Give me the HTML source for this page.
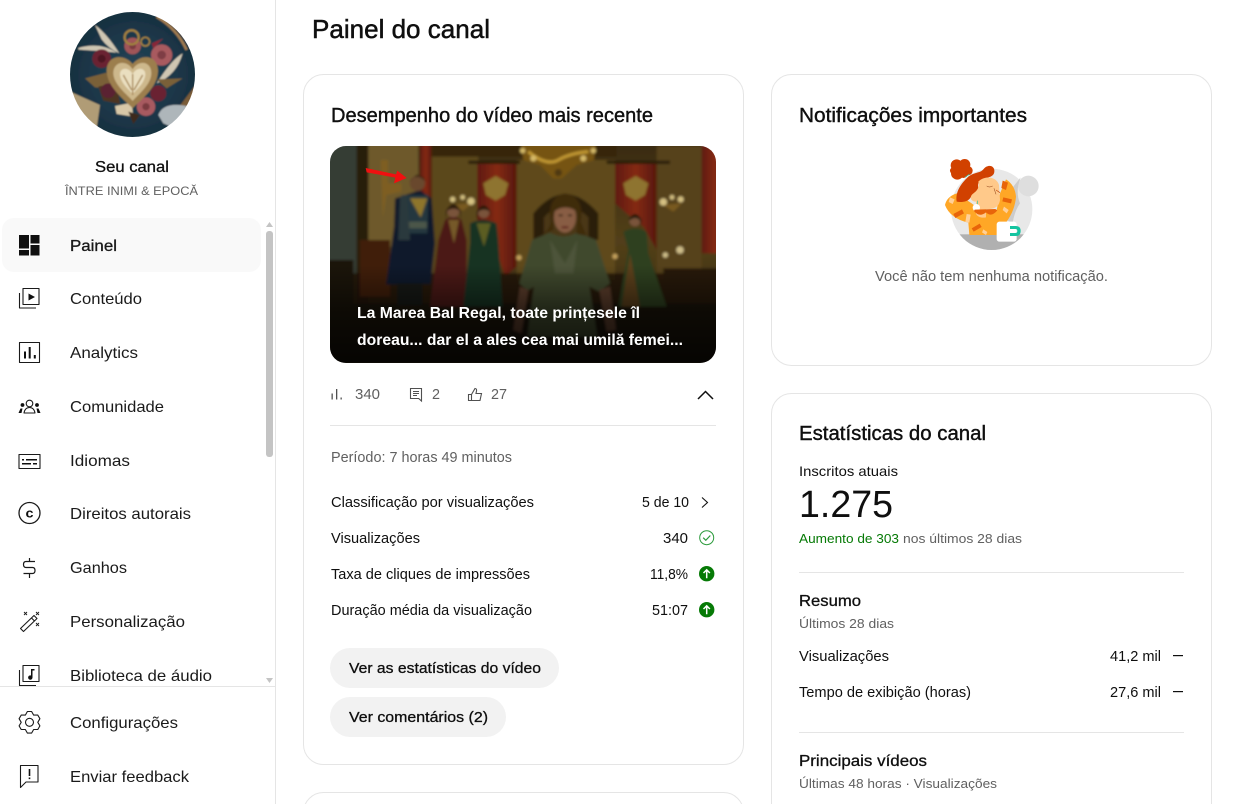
<!DOCTYPE html>
<html lang="pt"><head><meta charset="utf-8"><title>Painel do canal</title>
<style>
html,body{margin:0;padding:0;background:#fff;width:1238px;height:804px;overflow:hidden}
svg{display:block;position:absolute;left:0;top:0}
text{font-family:"Liberation Sans",sans-serif;fill:#0f0f0f;font-size:15px}
.m{stroke:#0f0f0f;stroke-width:.3px}
.h{font-size:20px;stroke:#0f0f0f;stroke-width:.4px}
.n{font-size:16px;fill:#1a1a1a}
.g{fill:#606060}
.s{font-size:13px;fill:#606060}
.w{fill:#fff;font-size:16px;font-weight:bold}
.card{fill:#fff;stroke:#e5e5e5;stroke-width:1}
.div{stroke:#e5e5e5;stroke-width:1}
.i{fill:none;stroke:#1a1a1a;stroke-width:1.1;stroke-linejoin:round}
.k{fill:#0f0f0f}
</style></head><body>
<svg width="1238" height="804" viewBox="0 0 1238 804" xmlns="http://www.w3.org/2000/svg">
<defs>
<clipPath id="av"><circle cx="132.5" cy="74.5" r="62.5"/></clipPath>
<clipPath id="th"><rect x="330" y="146" width="386" height="217" rx="16"/></clipPath>
<clipPath id="nv"><rect x="0" y="200" width="275" height="486"/></clipPath>
<clipPath id="nc"><circle cx="275" cy="208" r="122"/></clipPath>
<filter id="b1" x="-5%" y="-5%" width="110%" height="110%"><feGaussianBlur stdDeviation="4"/></filter>
<filter id="b3" x="-5%" y="-5%" width="110%" height="110%"><feGaussianBlur stdDeviation="2"/></filter>
<linearGradient id="fade" x1="0" y1="0" x2="0" y2="1"><stop offset=".55" stop-color="#000" stop-opacity="0"/><stop offset=".76" stop-color="#000" stop-opacity=".5"/><stop offset="1" stop-color="#000" stop-opacity=".8"/></linearGradient>
<linearGradient id="wall" x1="0" y1="0" x2="0" y2="1"><stop offset="0" stop-color="#3e2e12"/><stop offset=".45" stop-color="#5e4a20"/><stop offset="1" stop-color="#30240f"/></linearGradient>
<linearGradient id="cur" x1="0" y1="0" x2="1" y2="0"><stop offset="0" stop-color="#6e1c12"/><stop offset=".5" stop-color="#9c3018"/><stop offset="1" stop-color="#641a10"/></linearGradient>
<radialGradient id="avbg" cx=".5" cy=".5" r=".7"><stop offset="0" stop-color="#24465a"/><stop offset="1" stop-color="#102230"/></radialGradient>
</defs>

<!-- sidebar -->
<line x1="275.5" y1="0" x2="275.5" y2="804" class="div"/>
<g clip-path="url(#av)"><g transform="scale(.3333)"><g filter="url(#b3)">
<rect x="180" y="10" width="440" height="430" fill="url(#avbg)"/>
<path d="M460 38Q530 70 590 170L610 30Z" fill="#6a4e30"/><path d="M470 50Q530 85 560 150" fill="none" stroke="#a07c50" stroke-width="8"/>
<path d="M590 250L530 330 590 345Z" fill="#7a5c38"/>
<path d="M200 270L300 315 285 420 190 410Z" fill="#b09c76"/>
<path d="M345 318L395 308 400 350 350 342Z" fill="#d8c8a8"/>
<path d="M285 75Q320 100 358 160 325 145 305 118ZM235 144Q300 125 350 158 290 152 235 149Z" fill="#cfc6b2"/>
<path d="M548 160Q515 178 470 250 530 225 548 160Z" fill="#cfc6b2"/>
<path d="M475 345Q490 305 560 318L540 392 490 370Z" fill="#aeb6ba"/>
<path d="M255 235L320 218 335 265 285 262ZM470 238L548 235 500 265Z" fill="#7a6038"/>
<path d="M295 260L350 248 360 312 310 302Z" fill="#4e3424"/>
<circle cx="305" cy="176" r="28" fill="#6a2230"/><circle cx="305" cy="176" r="12" fill="#4e1824"/>
<circle cx="485" cy="165" r="32" fill="#a85a5e"/><circle cx="485" cy="165" r="13" fill="#7e3c44"/>
<circle cx="398" cy="138" r="25" fill="#a05458"/><circle cx="398" cy="138" r="10" fill="#7a3a40"/>
<circle cx="475" cy="280" r="24" fill="#6a2230"/><circle cx="438" cy="320" r="28" fill="#a85a60"/><circle cx="438" cy="320" r="11" fill="#7a3a40"/>
<circle cx="325" cy="272" r="22" fill="#5a2230"/>
<circle cx="395" cy="112" r="21" fill="none" stroke="#a08040" stroke-width="7"/><circle cx="436" cy="125" r="13" fill="none" stroke="#a08040" stroke-width="5"/>
<path d="M455 130L490 115 460 145Z" fill="#8a2838"/>
<path d="M398 192C370 158 318 166 320 215 323 262 370 297 398 325 426 297 472 262 474 215 476 166 426 158 398 192Z" fill="#9c7e4e"/>
<path d="M398 208C378 176 338 186 340 222 343 255 380 282 398 303 416 282 452 255 454 222 456 186 418 176 398 208Z" fill="#cdb88c"/>
<path d="M398 222C385 198 358 203 360 225 363 250 385 267 398 282 411 267 433 250 436 225 438 203 411 198 398 222Z" fill="#eadfc0"/>
<path d="M398 222V285M370 225L395 270M428 225L402 270" stroke="#a8895a" stroke-width="4"/>
<path d="M385 335L420 345 400 372Z" fill="#3e2a1a"/>
</g></g></g>
<text x="95" y="172" class="m" style="font-size:16px" textLength="74" lengthAdjust="spacingAndGlyphs">Seu canal</text>
<text x="65" y="195" class="g" style="font-size:12px" textLength="133" lengthAdjust="spacingAndGlyphs">ÎNTRE INIMI &amp; EPOCĂ</text>
<rect x="2" y="218" width="259" height="54" rx="12" fill="#f9f9f9"/>
<path d="M266 227l3.500-5 3.500 5z" fill="#c4c4c4"/>
<rect x="266" y="231" width="7" height="226" rx="3" fill="#c4c4c4"/>
<path d="M266 678l3.500 5 3.500-5z" fill="#c4c4c4"/>

<path class="k" d="M19 235h10v13.500H19zM30.500 235H39.500V243.500H30.500zM19 250H29v5.500H19zM30.500 245H39.500V255.500H30.500z"/>
<g class="i"><rect x="23" y="288.500" width="16" height="16"/><path d="M19.500 293V308H36"/></g><path class="k" d="M28.500 293.500V300.500L35 297z"/>
<rect x="19.500" y="342.500" width="20" height="20" class="i"/><path class="k" d="M24 351.500h2v7h-2zM28.700 347h2v11.500h-2zM33.800 355h2v3.500h-2z"/>
<g class="k"><circle cx="22.500" cy="405" r="1.900"/><circle cx="37" cy="405" r="1.900"/><path d="M18.500 413l2-4.500h2L21.500 413zM40.500 413l-2-4.500h-2l1 4.500z"/></g>
<g class="i"><circle cx="29.500" cy="403.500" r="3.300"/><path d="M24 413q1-5.500 5.500-5.500t5.500 5.500z"/></g>
<rect x="19" y="454.500" width="21" height="14" class="i"/><path class="k" d="M22 459h2v1.500h-2zM26 459h11v1.500H26zM22 463h9v1.500h-9zM33 463h4v1.500h-4z"/>
<circle cx="29.500" cy="513" r="10.500" class="i" style="stroke-width:1.300"/><text x="25.500" y="517.500" style="font-size:13px;font-weight:bold" textLength="8" lengthAdjust="spacingAndGlyphs">c</text>
<path class="i" style="stroke-width:1.200" d="M35 561.500h-9q-2.500 0-2.500 3t2.500 3h6.500q2.500 0 2.500 3t-2.500 3h-9M29.500 558v3.500M29.500 574v4"/>
<path class="i" d="M20.500 628.500L34 615.500 37 618.500 23.500 631.500zM31.500 618l3 3"/>
<path class="i" style="stroke-width:.9" d="M24 612l3 3M27 612l-3 3M36 612l3 3M39 612l-3 3M36 623l3 3M39 623l-3 3"/>
<g clip-path="url(#nv)"><g class="i"><rect x="23" y="665.500" width="16" height="16"/><path d="M19.500 670V685.500H36"/></g><path class="k" d="M31 669h3.500v1.500H32.500v7a2.200 2.200 0 1 1-1.500-2z"/></g>
<line x1="0" y1="686.500" x2="275" y2="686.500" class="div"/>
<g class="i"><circle cx="29.500" cy="722.300" r="4"/>
<path d="M27.400 711.500H31.600L33.650 715.100H37.800L39.900 718.700 37.800 722.300 39.900 725.900 37.800 729.500H33.650L31.600 733.100H27.400L25.350 729.500H21.200L19.100 725.900 21.200 722.300 19.100 718.700 21.200 715.100H25.350Z"/>
<path d="M20.500 765.500H38V782H26L20.500 787.500z"/></g>
<path class="k" d="M28.700 769h1.600v7h-1.600zM28.700 777.500h1.600v1.600h-1.600z"/>

<text x="70" y="251" class="n m" textLength="47" lengthAdjust="spacingAndGlyphs">Painel</text>
<text x="70" y="304" class="n" textLength="72" lengthAdjust="spacingAndGlyphs">Conteúdo</text>
<text x="70" y="358" class="n" textLength="68" lengthAdjust="spacingAndGlyphs">Analytics</text>
<text x="70" y="412" class="n" textLength="94" lengthAdjust="spacingAndGlyphs">Comunidade</text>
<text x="70" y="466" class="n" textLength="60" lengthAdjust="spacingAndGlyphs">Idiomas</text>
<text x="70" y="519" class="n" textLength="121" lengthAdjust="spacingAndGlyphs">Direitos autorais</text>
<text x="70" y="573" class="n" textLength="57" lengthAdjust="spacingAndGlyphs">Ganhos</text>
<text x="70" y="627" class="n" textLength="115" lengthAdjust="spacingAndGlyphs">Personalização</text>
<text x="70" y="681" class="n" textLength="142" lengthAdjust="spacingAndGlyphs">Biblioteca de áudio</text>
<text x="70" y="728" class="n" textLength="108" lengthAdjust="spacingAndGlyphs">Configurações</text>
<text x="70" y="782" class="n" textLength="119" lengthAdjust="spacingAndGlyphs">Enviar feedback</text>

<!-- main -->
<text x="312" y="38" class="m" style="font-size:26px;stroke-width:.5px" textLength="178" lengthAdjust="spacingAndGlyphs">Painel do canal</text>
<rect x="303.500" y="74.500" width="440" height="690" rx="20" class="card"/>
<rect x="771.500" y="74.500" width="440" height="291" rx="20" class="card"/>
<path d="M771.500 804V413.500a20 20 0 0 1 20-20h400a20 20 0 0 1 20 20V804" class="card"/>
<path d="M303.500 804V812.500a20 20 0 0 1 20-20h400a20 20 0 0 1 20 20V804" class="card" style="fill:none"/>
<text x="331" y="122" class="h" textLength="322" lengthAdjust="spacingAndGlyphs">Desempenho do vídeo mais recente</text>
<text x="799" y="122" class="h" textLength="228" lengthAdjust="spacingAndGlyphs">Notificações importantes</text>
<text x="799" y="440" class="h" textLength="187" lengthAdjust="spacingAndGlyphs">Estatísticas do canal</text>

<!-- thumbnail -->
<g clip-path="url(#th)"><g transform="translate(320 140) scale(.33333)">
<g filter="url(#b1)">
<rect x="0" y="-20" width="1220" height="720" fill="url(#wall)"/>
<rect x="0" y="-20" width="110" height="510" fill="#3a463f"/>
<rect x="110" y="-20" width="35" height="510" fill="#2c200c"/>
<rect x="145" y="-20" width="150" height="340" fill="#806a34"/>
<rect x="335" y="18" width="140" height="400" fill="#6a5424"/>
<rect x="590" y="60" width="295" height="360" fill="#6e5624"/>
<rect x="1010" y="18" width="135" height="400" fill="#644e20"/>
<rect x="300" y="-20" width="35" height="270" fill="url(#cur)"/>
<rect x="1145" y="-20" width="80" height="360" fill="url(#cur)"/>
<path d="M472 70H590V380L555 410 520 300 472 240Z" fill="url(#cur)"/>
<path d="M885 70H1010V330L970 260 920 220 885 190Z" fill="url(#cur)"/>
<path d="M445 62H600V72H445zM860 62H1050V72H860z" fill="#2e2008"/>
<path d="M490 130L527 108 565 130 555 165 527 182 498 165Z" fill="#a88a3a"/><path d="M910 130L947 108 985 130 975 165 947 182 918 165Z" fill="#a88a3a"/>
<path d="M640 300V220Q735 105 835 220V300Z" fill="#2e2008"/><path d="M672 290V232Q735 165 805 232V290Z" fill="#54401a"/>
<rect x="335" y="-20" width="555" height="70" fill="#3c2c10"/>
<path d="M600 -10H830L822 60 770 75 725 115 700 115 660 75 610 60Z" fill="#8a6418"/>
<path d="M625 35Q680 80 715 60T805 35" fill="none" stroke="#e8b840" stroke-width="9"/>
<circle cx="640" cy="55" r="9" fill="#ffe080"/><circle cx="790" cy="55" r="9" fill="#ffe080"/><circle cx="608" cy="32" r="8" fill="#ffe080"/><circle cx="820" cy="32" r="8" fill="#ffe080"/><circle cx="715" cy="98" r="11" fill="#5a4214"/>
<path d="M385 195l70-5-25 22z" fill="#8e6a28"/><circle cx="453" cy="184" r="11" fill="#ffeaa0"/><circle cx="398" cy="178" r="8" fill="#ffeaa0"/><circle cx="428" cy="172" r="7" fill="#ffeaa0"/>
<path d="M1030 195l55-5-25 25z" fill="#8e6a28"/><circle cx="1030" cy="186" r="11" fill="#ffe8a0"/><circle cx="1082" cy="178" r="9" fill="#ffe8a0"/><circle cx="1056" cy="172" r="7" fill="#ffe8a0"/>
<path d="M182 60h22v70h40v25l-45 10-10 70z" fill="#94702a"/>
<rect x="0" y="400" width="1220" height="100" fill="#241808" opacity=".85"/>
<path d="M120 300h90v170H120z" fill="#4a200c"/><path d="M1030 385h190v105H1030z" fill="#2c1a0a"/><path d="M0 360h100v130H0z" fill="#1e160e"/>
<circle cx="597" cy="353" r="8" fill="#e8c070"/><circle cx="885" cy="349" r="8" fill="#e8c070"/><circle cx="1080" cy="330" r="11" fill="#f6e4a8"/><circle cx="1036" cy="345" r="8" fill="#f6e4a8"/>
<rect x="0" y="490" width="1220" height="210" fill="#1e1610"/>
<!-- man -->
<path d="M225 175L300 150 335 175 345 310 332 432 198 434 222 260Z" fill="#111f34"/>
<path d="M245 165H325L322 280H252Z" fill="#25404e"/>
<path d="M270 175H322L302 232Z" fill="#a88c34"/><rect x="262" y="245" width="58" height="20" fill="#56665a"/>
<path d="M240 170L235 300 270 300 262 170Z" fill="#2e434c"/>
<path d="M232 430h40v65h-40zM272 430h35v65h-35z" fill="#141a1c"/>
<circle cx="292" cy="130" r="23" fill="#7a5438"/><path d="M268 126q22-32 50 0l-8-14-20-8z" fill="#362412"/>
<!-- women -->
<path d="M375 240Q400 220 425 240L440 300 440 500H330L355 300Z" fill="#561c1e"/><path d="M385 240h32l-15 70z" fill="#8a6a30"/><circle cx="400" cy="214" r="18" fill="#8f6448"/><path d="M378 212q22-40 44 0l2 25-6-25q-16-12-36 0l-6 25z" fill="#2e1c0e"/>
<path d="M450 250Q490 230 530 250L535 300 548 500H430L450 310Z" fill="#143a2a"/><path d="M470 250h42l-20 70z" fill="#6a6e2c"/><circle cx="491" cy="217" r="17" fill="#8f6448"/><path d="M470 215q21-38 42 0l2 25-5-25q-16-12-34 0l-5 25z" fill="#2e1c0e"/>
<path d="M910 275Q945 255 980 275L985 340 1040 500H895L925 330Z" fill="#324c26"/><path d="M930 340L905 500H960Z" fill="#6a4c22"/><circle cx="945" cy="242" r="17" fill="#8f6448"/><path d="M925 240q20-36 40 0l-3 20-3-20q-14-12-28 0z" fill="#261a0e"/>
<!-- heroine -->
<path d="M690 278Q730 300 772 278L828 300 870 430 838 455 808 440 832 590H622L642 440 622 452 598 430 636 300Z" fill="#4a5638"/>
<path d="M690 300L735 370 772 300 760 400H705Z" fill="#586446"/>
<path d="M600 440L625 450 604 580 580 570ZM838 450L870 440 888 570 860 575Z" fill="#6a4634"/>
<ellipse cx="735" cy="232" rx="33" ry="46" fill="#a06e52"/>
<path d="M692 245Q680 170 735 160 795 170 782 245L800 288 770 282 772 215Q735 190 702 215L700 270 650 292Q690 275 692 245Z" fill="#46300f"/>
<path d="M716 226h12M744 226h12" stroke="#2c1a0e" stroke-width="5"/><path d="M725 262h20" stroke="#6e2420" stroke-width="6"/>
</g>
<rect x="0" y="-20" width="1220" height="720" fill="#1c0e00" opacity=".18"/>
<rect x="0" y="18" width="1220" height="650" fill="url(#fade)"/>
<path d="M137 84L140 97 226 113 222 130 260 114 232 92 228 103Z" fill="#f01010"/>
</g>
<text x="357" y="318" class="w" textLength="283" lengthAdjust="spacingAndGlyphs">La Marea Bal Regal, toate prințesele îl</text>
<text x="357" y="345" class="w" textLength="326" lengthAdjust="spacingAndGlyphs">doreau... dar el a ales cea mai umilă femei...</text>
</g>

<!-- video stats -->
<path d="M331.500 393.500h1.300v6h-1.300zM336 389h1.300v10.500H336zM340.500 397.500h1.300v2h-1.300z" fill="#505050"/>
<text x="355" y="399" class="g" textLength="25" lengthAdjust="spacingAndGlyphs">340</text>
<path d="M410.500 388.500h11v12.500l-2.800-2.500h-8.200z" fill="none" stroke="#505050" stroke-width="1.100"/><path d="M413 391.500h6M413 393.500h6M413 395.500h4" stroke="#505050"/>
<text x="432" y="399" class="g" textLength="8" lengthAdjust="spacingAndGlyphs">2</text>
<path d="M468.500 394.500h3v6h-3zM471.500 394.500l3.500-6q2 .2 1.500 2.500l-.5 2.500h5.500l-1.500 7h-8.500" fill="none" stroke="#505050" stroke-width="1.100"/>
<text x="491" y="399" class="g" textLength="16" lengthAdjust="spacingAndGlyphs">27</text>
<path d="M698 399L705.500 391.500 713 399" fill="none" stroke="#0f0f0f" stroke-width="1.500"/>
<line x1="330" y1="425.500" x2="716" y2="425.500" class="div"/>
<text x="331" y="462" class="g" textLength="181" lengthAdjust="spacingAndGlyphs">Período: 7 horas 49 minutos</text>
<text x="331" y="507" textLength="203" lengthAdjust="spacingAndGlyphs">Classificação por visualizações</text>
<text x="331" y="543" textLength="89" lengthAdjust="spacingAndGlyphs">Visualizações</text>
<text x="331" y="579" textLength="199" lengthAdjust="spacingAndGlyphs">Taxa de cliques de impressões</text>
<text x="331" y="615" textLength="201" lengthAdjust="spacingAndGlyphs">Duração média da visualização</text>
<text x="642" y="507" textLength="47" lengthAdjust="spacingAndGlyphs">5 de 10</text>
<text x="663" y="543" textLength="25" lengthAdjust="spacingAndGlyphs">340</text>
<text x="650" y="579" textLength="38" lengthAdjust="spacingAndGlyphs">11,8%</text>
<text x="652" y="615" textLength="36" lengthAdjust="spacingAndGlyphs">51:07</text>
<path d="M702 497.500L707.500 502.500 702 507.500" fill="none" stroke="#0f0f0f" stroke-width="1.100"/>
<circle cx="706.700" cy="537.700" r="7" fill="none" stroke="#2a9a3a"/><path d="M703.200 537.700l2.600 2.600 4.500-4.800" fill="none" stroke="#2a9a3a" stroke-width="1.200"/>
<circle cx="706.700" cy="573.700" r="7.700" fill="#067a06"/><path d="M706.700 578.200v-8M703.500 573l3.200-3.200 3.200 3.200" fill="none" stroke="#fff" stroke-width="1.500"/>
<circle cx="706.700" cy="609.700" r="7.700" fill="#067a06"/><path d="M706.700 614.200v-8M703.500 609l3.200-3.200 3.200 3.200" fill="none" stroke="#fff" stroke-width="1.500"/>
<rect x="330" y="648" width="229" height="40" rx="20" fill="#f2f2f2"/>
<text x="349" y="673" class="m" textLength="192" lengthAdjust="spacingAndGlyphs">Ver as estatísticas do vídeo</text>
<rect x="330" y="697" width="176" height="40" rx="20" fill="#f2f2f2"/>
<text x="349" y="722" class="m" textLength="139" lengthAdjust="spacingAndGlyphs">Ver comentários (2)</text>

<!-- notification illustration -->
<g transform="translate(900 140) scale(.33333)">
<circle cx="275" cy="208" r="122" fill="#e8e8e8"/>
<rect x="150" y="283" width="250" height="50" fill="#b0b0b0" clip-path="url(#nc)"/>
<circle cx="385" cy="138" r="31" fill="#dedede"/>
<path d="M362 112Q345 155 360 190 345 210 338 248L318 240Q340 190 332 150z" fill="#cccccc"/>
<path d="M135 195Q140 170 170 160L215 190 240 210 290 210 300 160 318 118Q345 135 348 170 345 210 320 245L290 285H208L205 248Q150 235 135 195Z" fill="#ffa726"/>
<path d="M308 122l16 6-6 22-14-6zM310 172l26 6-3 12-26-6zM160 222l26-14 6 12-26 14zM215 265l24-14 6 10-24 14z" fill="#e8640a"/>
<path d="M150 172l14 6-6 14-12-6zM200 222l12 2-4 24-12-2zM250 268l12 8-4 9-12-8zM312 200l14 10-6 10-12-10z" fill="#ffd099"/>
<circle cx="170" cy="76" r="18" fill="#d14100"/><circle cx="194" cy="74" r="17" fill="#d14100"/><circle cx="204" cy="92" r="14" fill="#d14100"/><circle cx="172" cy="100" r="19" fill="#d14100"/><circle cx="190" cy="100" r="14" fill="#d14100"/><circle cx="160" cy="92" r="10" fill="#d14100"/>
<path d="M170 185C165 150 190 125 205 110 225 95 240 100 250 88 265 70 285 78 283 95 282 112 262 112 245 118 232 125 232 140 238 150 232 160 218 162 212 172 205 185 185 188 170 185Z" fill="#d14100"/>
<path d="M235 125C255 105 290 110 297 135L300 180C298 195 290 205 270 207L258 207 258 232C245 235 230 230 228 220L228 185C215 185 208 175 215 165 225 155 240 150 235 125Z" fill="#ffc98a"/>
<path d="M195 112l14-10" stroke="#2ec4a0" stroke-width="2"/>
<path d="M232 182v25" stroke="#2ec4a0" stroke-width="2"/><circle cx="229" cy="203" r="11" fill="#fff"/>
<path d="M222 213q16 20 36 4 16 16 34-6l-6-4-62 2z" fill="#e8640a"/>
<path d="M260 138q8 6 18 0M282 145l6 18" fill="none" stroke="#8a3a10" stroke-width="1.500"/><path d="M288 150l12 8" stroke="#c04a10" stroke-width="2"/>
<rect x="290" y="245" width="60" height="60" rx="8" fill="#fff"/>
<path d="M330 258h18q14 0 14 15t-14 15h-18v-9h16q6 0 6-6t-6-6h-16z" fill="#14c4a0"/>
</g>
<text x="875" y="281" class="g" textLength="233" lengthAdjust="spacingAndGlyphs">Você não tem nenhuma notificação.</text>

<!-- channel stats -->
<text x="799" y="476" style="font-size:14px" textLength="99" lengthAdjust="spacingAndGlyphs">Inscritos atuais</text>
<text x="799" y="517" style="font-size:38px" textLength="94" lengthAdjust="spacingAndGlyphs">1.275</text>
<text x="799" y="543" style="font-size:13px;fill:#067a06" textLength="100" lengthAdjust="spacingAndGlyphs">Aumento de 303</text>
<text x="903" y="543" class="s" textLength="119" lengthAdjust="spacingAndGlyphs">nos últimos 28 dias</text>
<line x1="799" y1="572.500" x2="1184" y2="572.500" class="div"/>
<text x="799" y="606" class="m" style="font-size:16px" textLength="62" lengthAdjust="spacingAndGlyphs">Resumo</text>
<text x="799" y="628" class="s" textLength="95" lengthAdjust="spacingAndGlyphs">Últimos 28 dias</text>
<text x="799" y="661" textLength="90" lengthAdjust="spacingAndGlyphs">Visualizações</text>
<text x="1110" y="661" textLength="51" lengthAdjust="spacingAndGlyphs">41,2 mil</text>
<rect x="1173" y="655" width="10" height="1.200" fill="#0f0f0f"/>
<text x="799" y="697" textLength="172" lengthAdjust="spacingAndGlyphs">Tempo de exibição (horas)</text>
<text x="1110" y="697" textLength="51" lengthAdjust="spacingAndGlyphs">27,6 mil</text>
<rect x="1173" y="691" width="10" height="1.200" fill="#0f0f0f"/>
<line x1="799" y1="732.500" x2="1184" y2="732.500" class="div"/>
<text x="799" y="766" class="m" style="font-size:16px" textLength="128" lengthAdjust="spacingAndGlyphs">Principais vídeos</text>
<text x="799" y="788" class="s" textLength="198" lengthAdjust="spacingAndGlyphs">Últimas 48 horas · Visualizações</text>
</svg>
</body></html>
